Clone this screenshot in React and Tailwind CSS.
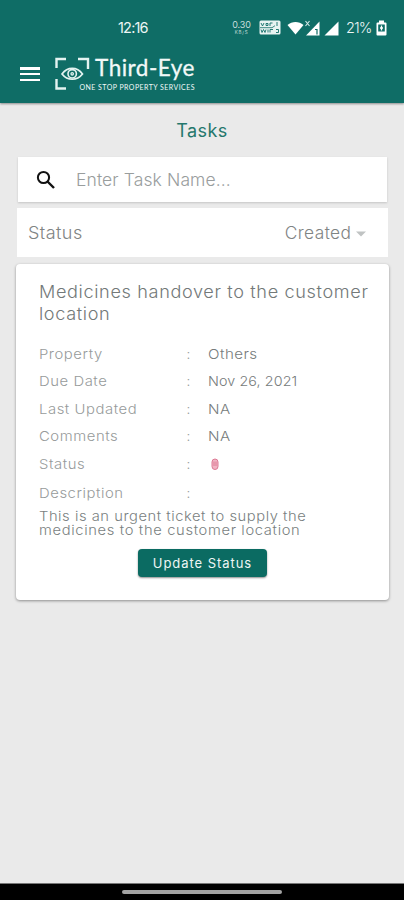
import React, { useState } from 'react';

const details = [
    { label: 'Property', value: 'Others', valueStyle: 'scale-x-[1.12] tracking-[0.4px]' },
    { label: 'Due Date', value: 'Nov 26, 2021', valueStyle: 'scale-x-[1.06] tracking-[0.1px]' },
    { label: 'Last Updated', value: 'NA', valueStyle: 'scale-x-[1.12] tracking-[0.4px]' },
    { label: 'Comments', value: 'NA', valueStyle: 'scale-x-[1.12] tracking-[0.4px]' },
];

const StatusBar = () => (
    <div className="flex h-[55px] items-center pl-[118px] pr-[17px] text-[#edf6f5]">
        <span className="w-[31px] whitespace-nowrap text-[14.5px] tracking-[-0.8px]">12:16</span>
        <div className="ml-auto flex items-center">
            {/* Network speed */}
            <div className="flex w-[19px] flex-col items-center text-[#c5dfdc]">
                <span className="text-[9px] leading-[11px] tracking-[-0.1px]">0.30</span>
                <span className="text-[4.5px] leading-[6px] tracking-[0.8px]">KB/S</span>
            </div>
            {/* VoWiFi badge */}
            <svg className="ml-[8px]" width="22" height="15" viewBox="0 0 22 15" fill="none">
                <rect x="0.5" y="0.5" width="21" height="14" rx="1.5" fill="#e8f4f2" />
                <path d="M2 3l1.5 3L5 3M7 3.5h2v2H7zM11 6V3h2.5M18 2v4M2 9.5l1 3 1.5-3L6 12.5l1-3M9 9.5v3M11 12.5V9.5h3M17 9.5h2.5v3H17" stroke="#0f6d66" strokeWidth="0.9" />
                <path d="M1 7.7h12l3-2" stroke="#0f6d66" strokeWidth="0.8" />
            </svg>
            <svg className="ml-[6px]" width="17" height="14" viewBox="0 0 17 14" fill="#fff">
                <path d="M0.5 4C5 0 12 0 16.5 4L8.5 13.5z" />
            </svg>
            {/* First SIM has no data */}
            <svg className="ml-px" width="15" height="16" viewBox="0 0 15 16">
                <path d="M14.5 1.5v14H1z" fill="#fff" />
                <path d="M0.5 1l4 5M4.5 1l-4 5" stroke="#d5e9e7" strokeWidth="1.1" />
                <path d="M10 9.5h2v5" stroke="#0f6d66" strokeWidth="1.2" fill="none" />
            </svg>
            <svg className="ml-[4px]" width="15" height="16" viewBox="0 0 15 16" fill="#fff">
                <path d="M14.5 1.5v14H0.5z" />
            </svg>
            <span className="ml-[7px] w-[26px] whitespace-nowrap text-[14.5px] font-light tracking-[-0.9px]">21%</span>
            <svg className="ml-[4px]" width="11" height="16" viewBox="0 0 11 16">
                <path d="M3 0.5h5v2h1.5a1 1 0 0 1 1 1v11a1 1 0 0 1-1 1h-8a1 1 0 0 1-1-1v-11a1 1 0 0 1 1-1H3z" fill="#fff" />
                <rect x="2.2" y="4.5" width="6.6" height="7" fill="#0f6d66" />
                <path d="M5.5 5.5v5M4 8h3" stroke="#fff" strokeWidth="1.3" />
            </svg>
        </div>
    </div>
);

const Logo = () => (
    <div className="flex">
        <svg className="shrink-0" width="37" height="34" viewBox="0 0 37 34" fill="none" stroke="#e4f3f1">
            <path d="M2.5 11V2H12M24 2h10v10M2.5 22v9.5H12" strokeWidth="2.4" />
            <path d="M8 17C13.5 9.5 23 9.5 28.5 17C23 24 13.5 24 8 17z" strokeWidth="1.7" />
            <circle cx="18.2" cy="16.8" r="4.2" strokeWidth="1.6" />
            <circle cx="18.2" cy="16.8" r="1.2" strokeWidth="1.3" />
        </svg>
        <div className="-ml-[11px] flex w-[115px] flex-col items-end font-[Lato,sans-serif] text-[#f2f9f8]">
            <span className="-mt-[2px] whitespace-nowrap text-[22.5px] leading-[25px] tracking-[0.5px] [-webkit-text-stroke:0.3px_#f2f9f8]">Third-Eye</span>
            <span className="mt-[3px] whitespace-nowrap text-[7px] leading-[8px] tracking-[0.45px]">ONE STOP PROPERTY SERVICES</span>
        </div>
    </div>
);

const DetailRow = ({ label, children }) => (
    <div className="flex h-[27.4px] items-center text-[13.5px] font-light">
        <span className="w-[148px] text-[#979b9b]">
            <span className="inline-block origin-left scale-x-[1.1] tracking-[0.5px]">{label}</span>
        </span>
        <span className="w-[21px] text-[#979b9b]">:</span>
        {children}
    </div>
);

const App = () => {
    const [taskName, setTaskName] = useState('');

    return (
        <div className="flex h-[900px] w-[404px] flex-col overflow-hidden bg-[#eaeaea] font-[Inter,sans-serif]">
            <header className="h-[103px] shrink-0 bg-[#0f6d66] shadow-[0_1px_2px_rgba(0,0,0,0.4)]">
                <StatusBar />
                <div className="flex pl-[20px]">
                    <button className="mt-[12px] flex h-[14px] w-[20px] flex-col justify-between" aria-label="Menu">
                        <span className="h-[2.5px] w-full bg-white" />
                        <span className="h-[2.5px] w-full bg-white" />
                        <span className="h-[2.5px] w-full bg-white" />
                    </button>
                    <div className="ml-[14px] mt-[2px]">
                        <Logo />
                    </div>
                </div>
            </header>

            <main className="flex-1 px-[16px]">
                <h1 className="pt-[15px] text-center text-[18px] leading-[26px] tracking-[0.4px] text-[#24776c]">Tasks</h1>

                {/* Search */}
                <div className="ml-[1.5px] mr-px mt-[13px] flex h-[45px] items-center bg-white pl-[18px] shadow-[0_1px_2px_rgba(0,0,0,0.16)]">
                    <svg className="mt-px" width="20" height="20" viewBox="0 0 20 20" fill="none" stroke="#111">
                        <circle cx="7.5" cy="7.5" r="5.6" strokeWidth="2" />
                        <path d="M11.5 11.5l6.5 6.5" strokeWidth="2.4" />
                    </svg>
                    <input
                        type="text"
                        value={taskName}
                        onChange={(e) => setTaskName(e.target.value)}
                        placeholder="Enter Task Name..."
                        className="ml-[20px] mt-[2px] w-[260px] origin-left scale-x-[1.03] bg-transparent text-[17px] font-light tracking-[0.1px] outline-none placeholder:text-[#999d9d]"
                    />
                </div>

                {/* Status filter */}
                <div className="ml-px flex h-[49px] mt-[6px] items-center bg-white pl-[11px] pr-[22px] pt-[2px] text-[17px] font-light text-[#7f8484]">
                    <span className="origin-left scale-x-[1.06] tracking-[0.4px]">Status</span>
                    <span className="ml-auto origin-right scale-x-[1.02] tracking-[0.4px]">Created</span>
                    <svg className="ml-[5px]" width="10" height="6" viewBox="0 0 10 6" fill="#c0c3c3">
                        <path d="M0 0.5h10L5 5.5z" />
                    </svg>
                </div>

                {/* Task card */}
                <div className="mt-[7px] flex h-[336px] w-[373px] flex-col rounded-[4px] bg-white pl-[22.5px] pt-[18px] shadow-[0_1px_3px_rgba(0,0,0,0.4)]">
                    <h2 className="origin-left scale-x-[1.065] whitespace-nowrap text-[17px] font-light leading-[21.5px] tracking-[0.6px] text-[#737979]">
                        Medicines handover to the customer<br />location
                    </h2>

                    <div className="mt-[15.5px]">
                        {details.map((item) => (
                            <DetailRow key={item.label} label={item.label}>
                                <span className={`origin-left text-[#767b7b] ${item.valueStyle}`}>{item.value}</span>
                            </DetailRow>
                        ))}
                        <DetailRow label="Status">
                            <svg className="ml-[3px]" width="8" height="12" viewBox="0 0 8 12" fill="none">
                                <rect x="1" y="1" width="6" height="10.5" rx="3" fill="#f0b4c3" stroke="#dd7a95" strokeWidth="1" />
                                <path d="M3 3.5v4.500M5 3.500v4.500" stroke="#d9708c" strokeWidth="0.8" />
                            </svg>
                        </DetailRow>
                        <div className="mt-[2px]">
                            <DetailRow label="Description" />
                        </div>
                    </div>

                    <p className="mt-[2px] origin-left scale-x-[1.09] whitespace-nowrap text-[13.5px] font-light leading-[14.5px] tracking-[0.5px] text-[#7a7f7f]">
                        This is an urgent ticket to supply the
                        <br />
                        <span className="tracking-[0.6px]">medicines to the customer location</span>
                    </p>

                    <button className="ml-[99.5px] mt-[11.5px] h-[28px] w-[129px] rounded-[4px] bg-[#0b6b62] text-[13px] tracking-[0.95px] text-[#eef6f5] shadow-[0_1px_2px_rgba(0,0,0,0.45)]">
                        Update Status
                    </button>
                </div>
            </main>

            {/* Gesture bar */}
            <div className="flex h-[16px] shrink-0 justify-center bg-black pt-[6px] shadow-[0_-1px_0_#777]">
                <div className="h-[4px] w-[160px] rounded-full bg-[#a3a3a3]" />
            </div>
        </div>
    );
};

export default App;
